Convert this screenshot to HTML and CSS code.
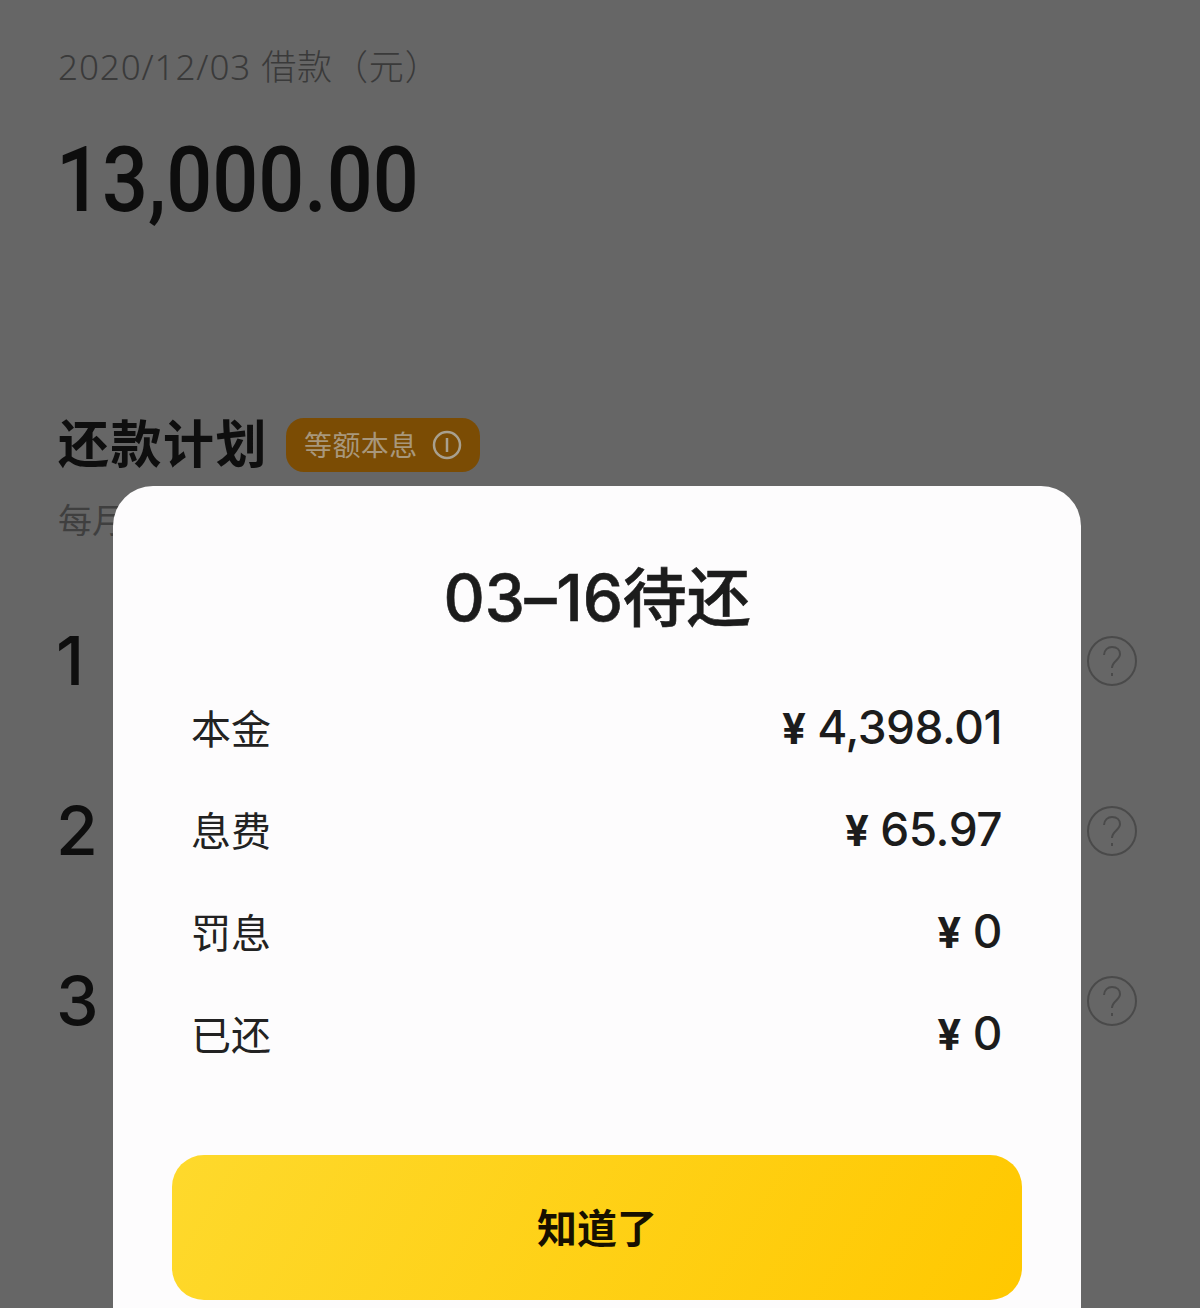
FILE: index.html
```html
<!DOCTYPE html>
<html lang="zh-CN">
<head>
  <meta charset="UTF-8">
  <title>还款计划</title>
  <link rel="stylesheet" href="styles.css">
</head>
<body>

<main class="page">
  <p class="loan-date">2020/12/03 借款（元）</p>
  <p class="loan-amount">13,000.00</p>

  <div class="plan-head">
    <h2 class="plan-title">还款计划</h2>
    <span class="plan-tag">等额本息
      <svg class="tag-icon" viewBox="0 0 30 30"><circle cx="15" cy="15" r="13"/><path d="M15 8v14"/></svg>
    </span>
  </div>
  <p class="plan-sub">每月</p>

  <div class="plan-rows">
    <div class="plan-row">
      <span class="plan-num">1</span>
      <svg class="help-icon" viewBox="0 0 50 50"><circle cx="25" cy="25" r="24"/><path d="M17 19c0-5 4-8 8-8 5 0 8 3 8 7 0 6-8 7-8 14"/><path d="M25 37v3"/></svg>
    </div>
    <div class="plan-row">
      <span class="plan-num">2</span>
      <svg class="help-icon" viewBox="0 0 50 50"><circle cx="25" cy="25" r="24"/><path d="M17 19c0-5 4-8 8-8 5 0 8 3 8 7 0 6-8 7-8 14"/><path d="M25 37v3"/></svg>
    </div>
    <div class="plan-row">
      <span class="plan-num">3</span>
      <svg class="help-icon" viewBox="0 0 50 50"><circle cx="25" cy="25" r="24"/><path d="M17 19c0-5 4-8 8-8 5 0 8 3 8 7 0 6-8 7-8 14"/><path d="M25 37v3"/></svg>
    </div>
  </div>
</main>

<section class="dialog">
  <h3 class="dialog-title">03–16待还</h3>
  <div class="dialog-rows">
    <div class="dialog-row"><span class="row-label">本金</span><span class="row-value"><i class="yen">¥</i>4,398.01</span></div>
    <div class="dialog-row"><span class="row-label">息费</span><span class="row-value"><i class="yen">¥</i>65.97</span></div>
    <div class="dialog-row"><span class="row-label">罚息</span><span class="row-value"><i class="yen">¥</i>0</span></div>
    <div class="dialog-row"><span class="row-label">已还</span><span class="row-value"><i class="yen">¥</i>0</span></div>
  </div>
  <button class="btn-ok">知道了</button>
</section>

</body>
</html>
```

FILE: styles.css
```css
html, body { margin: 0; height: 1308px; overflow: hidden; }
body { position: relative; background: #666666; font-family: Inter, "Noto Sans CJK SC", sans-serif; }
p, h2, h3 { margin: 0; font-weight: normal; }

.page { padding: 44px 63px 0 58px; }
.loan-date { font-size: 35px; line-height: 46px; letter-spacing: .9px; color: #3a3a3a; font-family: "Noto Sans", "Noto Sans CJK SC", sans-serif; font-weight: 300; }
.loan-amount { margin: 41px 0 0 -2px; font-family: Roboto, sans-serif; font-size: 90px; line-height: 100px; font-weight: 500; color: #0d0d0d; transform: scaleX(.9); transform-origin: left; }

.plan-head { display: flex; align-items: center; margin-top: 186px; height: 56px; }
.plan-title { font-size: 51px; line-height: 56px; font-weight: 700; color: #0e0e0e; letter-spacing: 1.5px; }
.plan-tag { display: flex; align-items: center; gap: 14px; height: 54px; box-sizing: border-box; margin-left: 18px; padding: 0 18px 3px; border-radius: 18px; background: #7b4c04; color: #a8977c; font-size: 28px; letter-spacing: .4px; }
.tag-icon { width: 30px; height: 30px; margin-top: 3px; fill: none; stroke: #a8a08f; stroke-width: 2.5; }
.plan-sub { margin-top: 24px; font-size: 34px; line-height: 48px; color: #3f3f3f; }

.plan-rows { margin-top: 31px; }
.plan-row { display: flex; justify-content: space-between; align-items: center; height: 170px; }
.plan-num { margin: -3px 0 0 -2px; font-size: 68px; font-weight: 500; line-height: 170px; color: #0e0e0e; }
.help-icon { width: 50px; height: 50px; fill: none; stroke: #4a4a4a; stroke-width: 2; }

.dialog { position: absolute; left: 113px; top: 486px; width: 968px; height: 900px; box-sizing: border-box; padding: 76px 59px 0; background: #fdfcfd; border-radius: 40px; }
.dialog-title { font-size: 64px; line-height: 72px; text-align: center; color: #1c1c1c; font-weight: 500; letter-spacing: -.2px; -webkit-text-stroke: .6px #1c1c1c; }
.dialog-rows { margin: 42px 20px 0 19px; }
.dialog-row { display: flex; justify-content: space-between; align-items: center; height: 102px; }
.row-label { font-size: 40px; color: #222222; }
.row-value { font-size: 46px; font-weight: 500; color: #1c1c1c; letter-spacing: -.5px; }
.yen { font-style: normal; font-size: 42px; font-weight: 700; margin-right: 12px; }
.btn-ok { display: block; width: 100%; height: 145px; margin-top: 71px; padding-bottom: 4px; border: none; border-radius: 32px; background: linear-gradient(120deg, #fed92c, #ffc800); color: #171000; font-family: inherit; font-size: 40px; font-weight: 700; }
```
